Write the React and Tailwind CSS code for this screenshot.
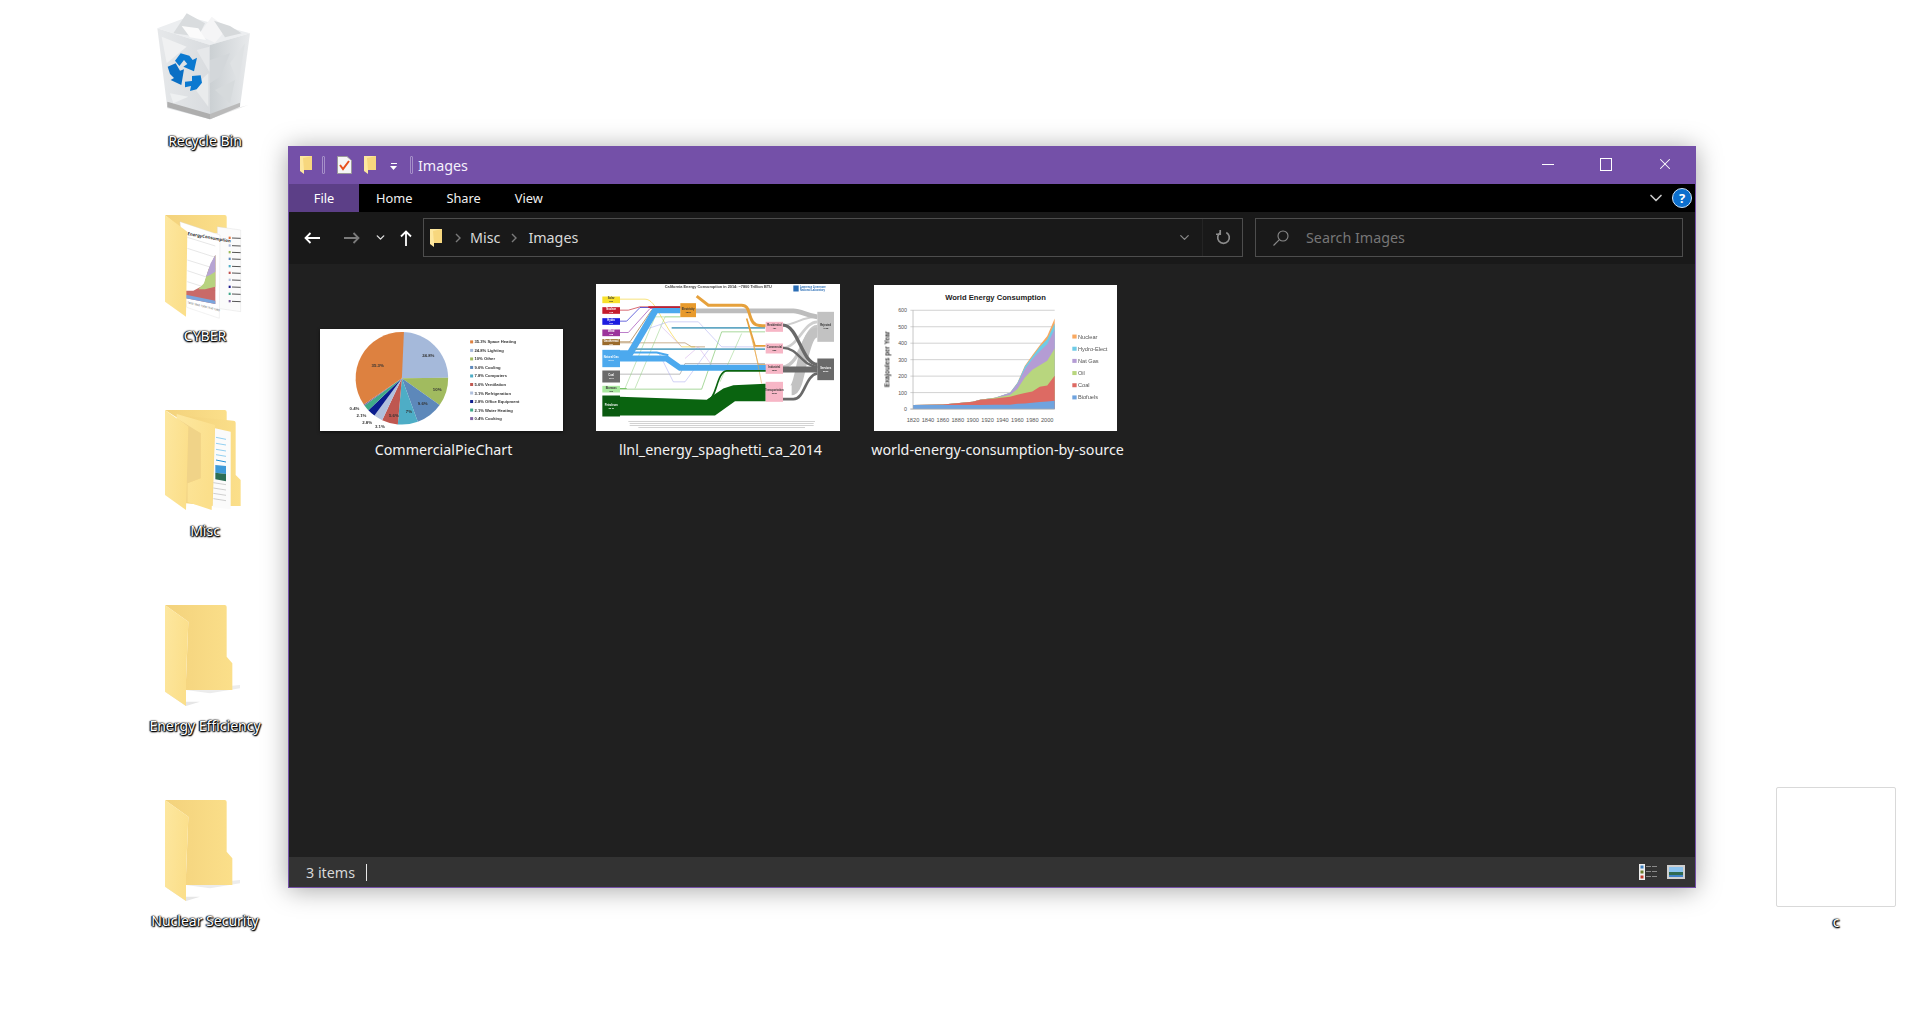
import { ChevronDown, X } from "lucide-react";

// desktop icons are drawn in the 3x coordinates of the reference crops
function FolderDefs() {
  return (
    <svg className="absolute h-0 w-0">
      <defs>
        <linearGradient id="folderBack" x1="0" y1="0" x2="1" y2="0">
          <stop offset="0" stopColor="#f3d27c" />
          <stop offset="1" stopColor="#fbdf8a" />
        </linearGradient>
        <linearGradient id="folderFlap" x1="0" y1="0" x2="1" y2="0.4">
          <stop offset="0" stopColor="#fde79f" />
          <stop offset="1" stopColor="#fbdf8b" />
        </linearGradient>
        <linearGradient id="binLeft" x1="0" y1="0" x2="1" y2="0">
          <stop offset="0" stopColor="#e6e8ea" />
          <stop offset="1" stopColor="#d9dcdf" />
        </linearGradient>
        <linearGradient id="binRight" x1="0" y1="0" x2="1" y2="0">
          <stop offset="0" stopColor="#cbd0d3" />
          <stop offset="1" stopColor="#e8eaec" />
        </linearGradient>
      </defs>
    </svg>
  );
}

function IconFrame({ children }) {
  return (
    <svg viewBox="0 0 450 390" className="h-[130px] w-[150px] shrink-0">
      {children}
    </svg>
  );
}

function RecycleBinIcon() {
  return (
    <IconFrame>
      <polygon points="130,320 240,358 355,315 240,345" fill="#e8e8e8" />
      <polygon points="82,85 175,50 360,100 240,135" fill="#eceef0" />
      <polygon points="82,85 240,135 240,358 112,325" fill="url(#binLeft)" />
      <polygon points="240,135 360,100 330,320 240,358" fill="url(#binRight)" />
      <polygon points="112,305 240,342 240,358 112,322" fill="#aeaeae" />
      <polygon points="240,342 330,308 330,320 240,358" fill="#bababa" />
      <polygon points="240,180 300,160 270,230 240,250" fill="#d3d7da" />
      <polygon points="300,190 345,130 325,250" fill="#dfe2e4" />
      <polygon points="255,270 315,240 300,310" fill="#d6dadc" />
      <polygon points="95,110 170,140 110,190" fill="#f0f1f2" />
      <polygon points="190,260 235,220 235,320" fill="#e9ebec" />
      <polygon points="120,280 175,290 130,310" fill="#eef0f1" />
      <polygon points="200,150 238,140 238,215" fill="#e6e8ea" />
      <polygon points="130,100 170,40 225,70 205,110" fill="#d9dcde" />
      <polygon points="205,105 245,50 292,85 255,128" fill="#f5f5f6" />
      <polygon points="155,78 205,85 228,120 180,112" fill="#fbfbfb" />
      <polygon points="252,62 300,78 335,100 285,112" fill="#d6d9db" />
      <polygon points="135,182 152,160 178,167 188,180 201,173 192,214 160,200 172,192 162,180 148,198" fill="#0b79d0" />
      <polygon points="113,200 137,190 150,212 162,208 154,255 122,240 132,234 120,222" fill="#0a6fc4" />
      <polygon points="165,245 186,243 186,228 212,226 216,248 200,268 180,273 183,258 165,262" fill="#0b79d0" />
    </IconFrame>
  );
}

function EmptyFolderIcon() {
  return (
    <IconFrame>
      <g transform="translate(0,-555)">
        <polygon points="168,870 330,855 330,865 240,880" fill="#ececec" />
        <polygon points="105,875 168,918 210,905 168,905" fill="#e6e6e6" />
        <path d="M105 615 H284 Q290 615 290 621 V770 L307 790 V870 H168 V840 L175 665 Z" fill="url(#folderBack)" />
        <polygon points="105,615 175,665 168,830 168,918 105,875" fill="url(#folderFlap)" />
      </g>
    </IconFrame>
  );
}

function CyberFolderIcon() {
  return (
    <IconFrame>
      <g transform="translate(0,-585)">
        <path d="M105 645 H284 Q290 645 290 651 V700 H168 Z" fill="url(#folderBack)" />
        <polygon points="262,680 332,690 332,935 262,925" fill="#fbfbfb" stroke="#d4d4d4" strokeWidth="1" />
        <rect x="296" y="710" width="6" height="7" fill="#e5733a" />
        <rect x="296" y="733" width="6" height="7" fill="#a8b7dc" />
        <rect x="296" y="753" width="6" height="7" fill="#9cbb58" />
        <rect x="296" y="773" width="6" height="7" fill="#5b88bb" />
        <rect x="296" y="795" width="6" height="7" fill="#4fadc5" />
        <rect x="296" y="815" width="6" height="7" fill="#c0504d" />
        <rect x="296" y="836" width="6" height="7" fill="#b0bfdc" />
        <rect x="296" y="857" width="6" height="7" fill="#1a1a8c" />
        <rect x="296" y="878" width="6" height="7" fill="#3fa88a" />
        <rect x="296" y="900" width="6" height="7" fill="#8064a2" />
        <g stroke="#555" strokeWidth="3">
          <line x1="306" y1="714" x2="332" y2="715" />
          <line x1="306" y1="737" x2="332" y2="738" />
          <line x1="306" y1="757" x2="332" y2="758" />
          <line x1="306" y1="777" x2="332" y2="778" />
          <line x1="306" y1="799" x2="332" y2="800" />
          <line x1="306" y1="819" x2="332" y2="820" />
          <line x1="306" y1="840" x2="332" y2="841" />
          <line x1="306" y1="861" x2="332" y2="862" />
          <line x1="306" y1="882" x2="332" y2="883" />
          <line x1="306" y1="904" x2="332" y2="905" />
        </g>
        <polygon points="150,665 270,705 268,955 170,922" fill="#fff" stroke="#d8d8d8" strokeWidth="1" />
        <g stroke="#cfcfcf" strokeWidth="1.5">
          <line x1="172" y1="712" x2="256" y2="738" />
          <line x1="172" y1="745" x2="256" y2="772" />
          <line x1="172" y1="780" x2="256" y2="806" />
          <line x1="172" y1="812" x2="256" y2="840" />
          <line x1="172" y1="845" x2="256" y2="872" />
        </g>
        <polygon points="168,895 256,912 256,765 235,810 222,855 190,872 168,872" fill="#c0504d" opacity="0.85" />
        <polygon points="205,868 222,850 235,810 256,765 256,860 225,868" fill="#b7d27f" />
        <polygon points="228,830 242,790 256,765 256,815 240,825" fill="#b6a4d3" />
        <polygon points="168,895 256,912 256,902 168,884" fill="#7ba5dd" />
        <text x="172" y="705" fontSize="13" fontWeight="700" fill="#333" transform="rotate(10 172 705)">EnergyConsumption</text>
        <text x="172" y="910" fontSize="8" fill="#555" transform="rotate(14 172 910)">1820 1860 1900 1940 1980</text>
        <polygon points="105,645 172,695 168,950 105,905" fill="url(#folderFlap)" />
      </g>
    </IconFrame>
  );
}

function MiscFolderIcon() {
  return (
    <IconFrame>
      <g transform="translate(0,30)">
        <path d="M105 30 H284 Q290 30 290 36 V70 H168 Z" fill="url(#folderBack)" />
        <path d="M140 45 L310 62 Q317 62 317 68 V225 L332 240 V318 H250 L168 310 V80 Z" fill="url(#folderBack)" />
        <polygon points="255,85 302,95 302,328 248,322" fill="#fbfbfb" />
        <g stroke="#7dc6ee" strokeWidth="2.5">
          <line x1="258" y1="112" x2="288" y2="118" />
          <line x1="258" y1="130" x2="288" y2="135" />
          <line x1="258" y1="148" x2="288" y2="153" />
          <line x1="258" y1="164" x2="288" y2="169" />
        </g>
        <line x1="258" y1="180" x2="288" y2="186" stroke="#1f8ed6" strokeWidth="3" />
        <polygon points="256,195 288,198 288,222 256,218" fill="#3f9ad8" />
        <polygon points="256,218 288,222 288,244 256,238" fill="#2d6e55" />
        <g stroke="#b8b8b8" strokeWidth="2">
          <line x1="250" y1="248" x2="288" y2="254" />
          <line x1="250" y1="264" x2="288" y2="270" />
          <line x1="250" y1="280" x2="288" y2="286" />
          <line x1="250" y1="296" x2="288" y2="302" />
        </g>
        <polygon points="140,42 255,75 245,330 172,306 172,250 212,235 212,100 140,62" fill="url(#folderFlap)" />
        <polygon points="140,55 212,100 212,235 172,250 172,306 168,305 175,80" fill="#f0d388" />
        <polygon points="105,30 175,80 168,330 105,285" fill="url(#folderFlap)" />
      </g>
    </IconFrame>
  );
}

function DesktopItem({ label, children }) {
  return (
    <div className="flex h-[195px] flex-col items-center">
      {children}
      <span className="mt-[1px] whitespace-nowrap text-[14px] leading-5 text-white [text-shadow:0_0_1px_#000,0_0_2px_#000,0_1px_2px_#000,1px_1px_1px_#000,-1px_0_1px_#000]">
        {label}
      </span>
    </div>
  );
}

const PIE_SLICES = [
  [24.8, "#a5b9da"],
  [10, "#a1bb5f"],
  [9.6, "#5d88ba"],
  [7, "#4eadc6"],
  [5.6, "#bf5750"],
  [3.1, "#b1c0dd"],
  [2.8, "#0a1c8e"],
  [2.1, "#40a98a"],
  [0.4, "#8064a2"],
  [35.3, "#dd8140"],
];

const PIE_LEGEND = [
  ["#dd8140", "35.3% Space Heating"],
  ["#a5b9da", "24.8% Lighting"],
  ["#a1bb5f", "10% Other"],
  ["#5d88ba", "9.6% Cooling"],
  ["#4eadc6", "7.8% Computers"],
  ["#bf5750", "5.6% Ventilation"],
  ["#b1c0dd", "3.1% Refrigeration"],
  ["#0a1c8e", "2.8% Office Equipment"],
  ["#40a98a", "2.1% Water Heating"],
  ["#8064a2", "0.4% Cooking"],
];

function pieSlices() {
  const cx = 274;
  const cy = 175;
  const r = 139;
  let used = 0;
  return PIE_SLICES.map(([pct, color]) => {
    const a0 = (used / 100) * Math.PI * 2;
    used += pct;
    const a1 = (used / 100) * Math.PI * 2;
    const x0 = cx + r * Math.sin(a0);
    const y0 = cy - r * Math.cos(a0);
    const x1 = cx + r * Math.sin(a1);
    const y1 = cy - r * Math.cos(a1);
    const large = pct > 50 ? 1 : 0;
    return (
      <path
        key={color}
        d={`M${cx} ${cy} L${x0} ${y0} A${r} ${r} 0 ${large} 1 ${x1} ${y1} Z`}
        fill={color}
      />
    );
  });
}

function PieThumb() {
  return (
    <svg viewBox="28 28 730 304" className="block h-[102px] w-[243px] blur-[0.35px]">
      <rect x="28" y="28" width="730" height="304" fill="#fff" />
      {pieSlices()}
      <g fontSize="13" fontWeight="700" fill="#333" fontFamily="Liberation Sans, sans-serif">
        <text x="183" y="140">35.3%</text>
        <text x="335" y="112">24.8%</text>
        <text x="367" y="212">10%</text>
        <text x="322" y="255">9.6%</text>
        <text x="286" y="280">7%</text>
        <text x="235" y="290">5.6%</text>
        <text x="117" y="269">0.4%</text>
        <text x="138" y="290">2.1%</text>
        <text x="155" y="311">2.8%</text>
        <text x="193" y="324">3.1%</text>
      </g>
      {PIE_LEGEND.map(([color, text], i) => (
        <g key={text}>
          <rect x="479" y={61 + i * 25.6} width="9" height="9" fill={color} />
          <text x="492" y={70 + i * 25.6} fontSize="12.5" fontWeight="700" fill="#333" fontFamily="Liberation Sans, sans-serif">
            {text}
          </text>
        </g>
      ))}
    </svg>
  );
}

function SankeyBox({ x, y, w, h, fill, title, value, color = "#fff" }) {
  return (
    <g>
      <rect x={x} y={y} width={w} height={h} fill={fill} />
      <text x={x + w / 2} y={y + h / 2 - 1} textAnchor="middle" fontSize="8" fontWeight="700" fill={color}>{title}</text>
      <text x={x + w / 2} y={y + h / 2 + 8} textAnchor="middle" fontSize="7" fontWeight="700" fill={color}>{value}</text>
    </g>
  );
}

function SankeyThumb() {
  return (
    <svg viewBox="33 27 732 440" className="block h-[147px] w-[244px] blur-[0.4px]" fontFamily="Liberation Sans, sans-serif">
      <rect x="33" y="27" width="732" height="440" fill="#fff" />
      <text x="400" y="40" textAnchor="middle" fontSize="11.5" fontWeight="700" fill="#444">California Energy Consumption in 2014: ~7800 Trillion BTU</text>
      <rect x="625" y="31" width="16" height="18" fill="#2a6db5" />
      <text x="645" y="38" fontSize="8" fontWeight="700" fill="#2a6db5">Lawrence Livermore</text>
      <text x="645" y="48" fontSize="8" fontWeight="700" fill="#2a6db5">National Laboratory</text>

      {/* thin flows */}
      <g fill="none" strokeWidth="2">
        <path d="M105 72 H180 C215 72 230 150 290 215 H330" stroke="#f5d33b" />
        <path d="M105 105 H130 L165 95 H286" stroke="#c41f2c" />
        <path d="M105 138 H125 L165 97 H286" stroke="#2020cc" />
        <path d="M105 172 H130 L195 100 H286" stroke="#9c3fb0" />
        <path d="M105 200 H135 L200 105 H286" stroke="#9a6a2a" />
        <path d="M105 203 H300 L320 215 H360" stroke="#b08a5a" />
        <path d="M105 297 H285 L300 265 H540" stroke="#9a9a9a" />
        <path d="M105 342 H350 L410 170 H540" stroke="#7bc46a" />
        <path d="M120 340 L210 125 H286" stroke="#8ccf7a" strokeWidth="1.5" />
        <path d="M150 340 L240 125 H286" stroke="#8ccf7a" strokeWidth="1.5" />
        <path d="M190 160 L250 140 H340 L410 215 H540" stroke="#a6a6ee" strokeWidth="1.5" />
        <path d="M220 230 L265 320 H300 L370 225" stroke="#a6a6ee" strokeWidth="1.5" />
        <path d="M300 250 L340 215 L380 270 H540" stroke="#cfa6e6" strokeWidth="1.5" />
        <path d="M470 175 L405 320" stroke="#8ccf7a" strokeWidth="1.5" />
        <path d="M225 150 L290 215" stroke="#c9a6e6" strokeWidth="1.5" />
      </g>

      {/* rejected energy */}
      <path d="M594 150 C630 150 650 125 697 125" fill="none" stroke="#cfcfcf" strokeWidth="6" />
      <path d="M594 218 C640 218 655 140 697 140" fill="none" stroke="#cfcfcf" strokeWidth="8" />
      <path d="M594 275 C645 275 660 150 697 155" fill="none" stroke="#c8c8c8" strokeWidth="10" />
      <path d="M620 345 C650 345 650 170 697 172" fill="none" stroke="#c2c2c2" strokeWidth="30" />
      <path d="M333 107 L500 107 H625 C650 107 665 122 697 125" fill="none" stroke="#bdbdbd" strokeWidth="14" />

      {/* natural gas and electricity */}
      <path d="M105 250 H245 L285 278 H545" fill="none" stroke="#4ca9ee" strokeWidth="18" />
      <path d="M105 235 H135 L212 104 H286" fill="none" stroke="#4ca9ee" strokeWidth="20" />
      <path d="M105 232 L215 232 L250 240" fill="none" stroke="#4ca9ee" strokeWidth="6" />
      <path d="M190 96 H286" stroke="#c41f2c" strokeWidth="5" />
      <path d="M260 158 H540" fill="none" stroke="#63a8c4" strokeWidth="5" />
      <path d="M150 222 H540" fill="none" stroke="#63a8c4" strokeWidth="5" />
      <path d="M335 63 L370 90 H470 C490 90 490 110 498 130 C505 150 515 152 542 152" fill="none" stroke="#e6a13c" strokeWidth="9" />
      <path d="M485 130 L510 212 H542" fill="none" stroke="#e6a13c" strokeWidth="5" />
      <path d="M490 150 L520 268 H542" fill="none" stroke="#e6a13c" strokeWidth="2" />
      <path d="M505 200 L530 325" fill="none" stroke="#e6a13c" strokeWidth="1.5" />

      {/* petroleum */}
      <polygon points="105,365 365,374 415,340 445,330 542,326 542,378 450,378 390,421 105,421" fill="#0a6410" />
      <path d="M370 374 C395 370 395 289 425 287 H545" fill="none" stroke="#0a6410" strokeWidth="5" />
      <path d="M105 340 H125" stroke="#7bc46a" strokeWidth="3" />

      {/* useful energy */}
      <path d="M594 150 C640 150 650 265 697 268" fill="none" stroke="#696969" strokeWidth="10" />
      <path d="M594 218 C640 218 650 272 697 275" fill="none" stroke="#696969" strokeWidth="7" />
      <path d="M594 283 H697" fill="none" stroke="#696969" strokeWidth="18" />
      <path d="M594 372 H625 C660 372 660 300 697 295" fill="none" stroke="#696969" strokeWidth="8" />

      <SankeyBox x={52} y={64} w={53} h={20} fill="#f8e02c" title="Solar" value="220" color="#333" />
      <SankeyBox x={52} y={96} w={53} h={20} fill="#c61c2e" title="Nuclear" value="175" />
      <SankeyBox x={52} y={129} w={53} h={20} fill="#1c1ce0" title="Hydro" value="161" />
      <SankeyBox x={52} y={163} w={53} h={20} fill="#9c349c" title="Wind" value="128" />
      <SankeyBox x={52} y={192} w={53} h={18} fill="#9a6a2a" title="Geothermal" value="127" />
      <SankeyBox x={52} y={224} w={53} h={52} fill="#4ca9ee" title="Natural Gas" value="2417" />
      <SankeyBox x={52} y={286} w={53} h={36} fill="#6b6b6b" title="Coal" value="19.3" />
      <SankeyBox x={52} y={332} w={53} h={20} fill="#aaeaa0" title="Biomass" value="366" color="#333" />
      <SankeyBox x={52} y={361} w={53} h={63} fill="#0a5a10" title="Petroleum" value="3648" />
      <SankeyBox x={286} y={84} w={47} h={42} fill="#e89a2c" title="Electricity" value="1853" color="#333" />
      <SankeyBox x={542} y={140} w={52} h={30} fill="#f7b6c6" title="Residential" value="451" color="#333" />
      <SankeyBox x={542} y={205} w={52} h={30} fill="#f7b6c6" title="Commercial" value="552" color="#333" />
      <SankeyBox x={542} y={266} w={52} h={30} fill="#f7b6c6" title="Industrial" value="1535" color="#333" />
      <SankeyBox x={542} y={320} w={52} h={60} fill="#f7b6c6" title="Transportation" value="3038" color="#333" />
      <SankeyBox x={697} y={110} w={50} h={90} fill="#c2c2c2" title="Rejected" value="4668" color="#333" />
      <SankeyBox x={697} y={250} w={50} h={65} fill="#6a6a6a" title="Services" value="2503" />

      <g fill="#bbb">
        <rect x="130" y="438" width="560" height="2" />
        <rect x="134" y="444" width="552" height="2" />
        <rect x="134" y="450" width="552" height="2" />
        <rect x="160" y="456" width="500" height="2" />
      </g>
    </svg>
  );
}

const YEARS = [1820, 1860, 1900, 1910, 1930, 1950, 1960, 1970, 1980, 1990, 2000, 2010];
const ENERGY_LAYERS = [
  ["#f8a860", [388, 386, 378, 372, 366, 351, 321, 270, 238, 208, 180, 128]],
  ["#6fcbe6", [388, 386, 378, 372, 366, 351, 322, 272, 243, 213, 190, 142]],
  ["#b49cd4", [388, 386, 378, 372, 366, 352, 325, 280, 250, 226, 205, 160]],
  ["#b8d67e", [388, 386, 378, 372, 366, 358, 340, 305, 282, 268, 255, 218]],
  ["#dd6a63", [388, 386, 378, 372, 368, 363, 357, 352, 347, 333, 329, 300]],
  ["#6fa3de", [388, 388, 388, 388, 387, 387, 384, 383, 381, 379, 377, 375]],
];

function areaPoints(tops) {
  const top = YEARS.map((y, i) => `${142 + (y - 1820) * 2.242},${tops[i]}`);
  return `142,400 ${top.join(" ")} 568,400`;
}

function WorldThumb() {
  const yLabels = [0, 100, 200, 300, 400, 500, 600];
  const xLabels = [1820, 1840, 1860, 1880, 1900, 1920, 1940, 1960, 1980, 2000];
  const legend = [
    ["#f8a860", "Nuclear"],
    ["#6fcbe6", "Hydro-Elect"],
    ["#b49cd4", "Nat Gas"],
    ["#b8d67e", "Oil"],
    ["#dd6a63", "Coal"],
    ["#6fa3de", "Biofuels"],
  ];
  return (
    <svg viewBox="25 27 730 439" className="block h-[146px] w-[243px] blur-[0.3px]" fontFamily="Liberation Sans, sans-serif">
      <rect x="25" y="27" width="730" height="439" fill="#fff" />
      <text x="390" y="71" textAnchor="middle" fontSize="23" fontWeight="700" fill="#222">World Energy Consumption</text>
      {yLabels.map((v) => (
        <g key={v}>
          <line x1="134" x2="568" y1={400 - v * 0.495} y2={400 - v * 0.495} stroke="#c9c9c9" strokeWidth="2.5" />
          <text x="124" y={406 - v * 0.495} textAnchor="end" fontSize="16" fill="#555">{v}</text>
        </g>
      ))}
      {ENERGY_LAYERS.map(([color, tops]) => (
        <polygon key={color} points={areaPoints(tops)} fill={color} />
      ))}
      <line x1="142" y1="103" x2="142" y2="400" stroke="#aaa" strokeWidth="2" />
      <line x1="134" y1="400" x2="568" y2="400" stroke="#aaa" strokeWidth="2" />
      {xLabels.map((v) => (
        <text key={v} x={142 + (v - 1820) * 2.242} y="438" textAnchor="middle" fontSize="17" fill="#555">{v}</text>
      ))}
      <text x="0" y="0" textAnchor="middle" fontSize="19" fontWeight="700" fill="#333" transform="translate(72,250) rotate(-90)">Exajoules per Year</text>
      {legend.map(([color, text], i) => (
        <g key={text}>
          <rect x="621" y={176 + i * 36.6} width="13" height="12" fill={color} />
          <text x="638" y={188 + i * 36.6} fontSize="17" fill="#555">{text}</text>
        </g>
      ))}
    </svg>
  );
}

function Tile({ label, children, imageClass }) {
  return (
    <div className="flex w-[277px] shrink-0 flex-col items-center">
      <div className="flex h-[147px] items-end">
        <div className={imageClass}>{children}</div>
      </div>
      <span className="mt-[9px] whitespace-nowrap text-[14.3px] leading-5 text-[#f2f2f2]">{label}</span>
    </div>
  );
}

function SmallFolder({ className }) {
  return (
    <svg viewBox="0 0 13 18" className={className}>
      <polygon points="1,0 13,0 13,14 5,14 5,18 1,15" fill="#fde79f" />
      <polygon points="4,2 13,0 13,14 5,14" fill="#f7d77e" />
    </svg>
  );
}

function BarSeparator() {
  return <div className="h-[18px] w-[3px] rounded-[1px] border border-[#a58fc8]" />;
}

function TitleBar() {
  return (
    <div className="flex h-[38px] shrink-0 items-center bg-[#7450a8] pl-[10px] text-white">
      <SmallFolder className="h-[18px] w-[13px]" />
      <div className="ml-[10px]"><BarSeparator /></div>
      <svg viewBox="0 0 15 18" className="ml-[12px] h-[18px] w-[15px]">
        <path d="M0.5 0.5 H10 L14.5 4.5 V17.5 H0.5 Z" fill="#f5f5f5" stroke="#9a9a9a" />
        <path d="M3 9 L6 13 L12 5" fill="none" stroke="#e8501c" strokeWidth="2" />
      </svg>
      <SmallFolder className="ml-[11px] h-[18px] w-[13px]" />
      <svg viewBox="0 0 8 8" className="ml-[14px] mt-[3px] h-[8px] w-[8px]">
        <rect x="1" y="0" width="6" height="1" fill="#fff" />
        <polygon points="0,3 7,3 3.5,7" fill="#fff" />
      </svg>
      <div className="ml-[12px]"><BarSeparator /></div>
      <span className="ml-[5px] mt-[1px] text-[14.3px] text-[#f5f0fb]">Images</span>
      <div className="ml-auto flex h-full items-center">
        <div className="flex w-[58px] justify-center pb-[2px]">
          <div className="h-px w-[12px] bg-white" />
        </div>
        <div className="flex w-[58px] justify-center pb-[2px]">
          <div className="h-[13px] w-[12px] border border-white" />
        </div>
        <div className="flex w-[60px] justify-center pb-[2px]">
          <X className="h-[18px] w-[18px]" strokeWidth={1.4} />
        </div>
      </div>
    </div>
  );
}

function RibbonTabs() {
  return (
    <div className="flex h-[28px] shrink-0 items-center bg-black pt-[1px] text-[12.8px] text-[#f0f0f0]">
      <div className="-mt-[1px] flex h-[28px] w-[70px] items-center justify-center bg-[#5c3f87] pt-[1px] text-white">File</div>
      <span className="ml-[17px]">Home</span>
      <span className="ml-[34px]">Share</span>
      <span className="ml-[34px]">View</span>
      <ChevronDown className="ml-auto -mt-[1px] h-[20px] w-[20px] text-[#c8c8c8]" strokeWidth={2} />
      <div className="-mt-[1px] ml-[6px] mr-[3px] flex h-[20px] w-[20px] items-center justify-center rounded-full border border-[#cfe4f8] bg-[#0c6fcd] text-[13px] font-bold leading-none text-white">
        ?
      </div>
    </div>
  );
}

function ArrowLeft({ className }) {
  return (
    <svg viewBox="0 0 16 12" className={className} fill="none" stroke="currentColor" strokeWidth="1.8">
      <path d="M16 6 H1.5 M6.5 1 L1.5 6 L6.5 11" />
    </svg>
  );
}

function AddressBar() {
  return (
    <div className="flex h-[52px] shrink-0 items-center bg-[#191919] pb-[1px] pr-[12px]">
      <ArrowLeft className="ml-[15px] h-[12px] w-[16px] text-white" />
      <ArrowLeft className="ml-[24px] h-[12px] w-[16px] rotate-180 text-[#7b7b7b]" />
      <ChevronDown className="ml-[14px] h-[13px] w-[13px] text-[#e0e0e0]" strokeWidth={2.5} />
      <svg viewBox="0 0 12 16" className="ml-[13px] h-[16px] w-[12px] text-white" fill="none" stroke="currentColor" strokeWidth="1.8">
        <path d="M6 16 V1.5 M1 6.5 L6 1.5 L11 6.5" />
      </svg>
      <div className="ml-[11px] flex h-[39px] w-[820px] items-center border border-[#4d4d4d] text-[14.3px] text-[#d9d9d9]">
        <SmallFolder className="ml-[5px] h-[18px] w-[13px]" />
        <svg viewBox="0 0 6 10" className="ml-[13px] h-[10px] w-[6px]" fill="none" stroke="#7a7a7a" strokeWidth="1.4"><path d="M1 1 L5 5 L1 9" /></svg>
        <span className="ml-[9px]">Misc</span>
        <svg viewBox="0 0 6 10" className="ml-[11px] h-[10px] w-[6px]" fill="none" stroke="#7a7a7a" strokeWidth="1.4"><path d="M1 1 L5 5 L1 9" /></svg>
        <span className="ml-[11px]">Images</span>
        <div className="ml-auto flex h-full items-center">
          <ChevronDown className="mr-[10px] h-[15px] w-[15px] text-[#8a8a8a]" strokeWidth={2} />
          <div className="h-full w-px bg-[#242424]" />
          <svg viewBox="0 0 16 16" className="ml-[13px] mr-[11px] h-[15px] w-[15px]" fill="none" stroke="#8c8c8c" strokeWidth="1.8">
            <path d="M5 2.6 A6.2 6.2 0 1 0 11 2.6" />
            <path d="M4.5 0 V4.5 H0" />
          </svg>
        </div>
      </div>
      <div className="ml-[12px] flex h-[39px] flex-1 items-center border border-[#4d4d4d] text-[14.3px] text-[#767676]">
        <svg viewBox="0 0 16 16" className="ml-[17px] h-[16px] w-[16px]" fill="none" stroke="#8a8a8a" strokeWidth="1.1">
          <circle cx="10" cy="6" r="5" />
          <path d="M6.4 9.6 L0.5 15.5" />
        </svg>
        <span className="ml-[17px]">Search Images</span>
      </div>
    </div>
  );
}

function StatusBar() {
  return (
    <div className="flex h-[30px] shrink-0 items-center bg-[#333333] pl-[17px] pr-[10px] text-[14.3px] text-[#d8d8d8]">
      <span className="mt-[1px]">3 items</span>
      <div className="ml-[11px] mt-[1px] h-[17px] w-px bg-[#e8e8e8]" />
      <div className="ml-auto flex items-center">
        <svg viewBox="0 0 19 16" className="h-[16px] w-[19px]">
          <rect x="0" y="0" width="6" height="16" fill="#eee" />
          <rect x="1.5" y="1.5" width="3" height="3" fill="#3a7fc0" />
          <rect x="1.5" y="6.5" width="3" height="3" fill="#6a7a2a" />
          <rect x="1.5" y="11.5" width="3" height="3" fill="#c03a2a" />
          <g fill="#8a8a8a">
            <rect x="7" y="2" width="5" height="1" />
            <rect x="13" y="2" width="5" height="1" />
            <rect x="7" y="7" width="5" height="1" />
            <rect x="13" y="7" width="5" height="1" />
            <rect x="7" y="12" width="5" height="1" />
            <rect x="13" y="12" width="5" height="1" />
          </g>
        </svg>
        <svg viewBox="0 0 18 14" className="ml-[9px] h-[14px] w-[18px]">
          <rect x="0" y="0" width="18" height="14" fill="#cfcfcf" />
          <rect x="2" y="2" width="14" height="5" fill="#8cc4f0" />
          <rect x="2" y="7" width="14" height="3" fill="#2f6a50" />
          <rect x="2" y="10" width="14" height="2" fill="#3f82c8" />
        </svg>
      </div>
    </div>
  );
}

function ExplorerWindow() {
  return (
    <div className="absolute left-[288px] top-[146px] flex h-[742px] w-[1408px] flex-col border-x border-b border-[#7450a8] shadow-[0_2px_24px_rgba(0,0,0,0.35)]">
      <TitleBar />
      <RibbonTabs />
      <AddressBar />
      <div className="flex min-h-0 flex-1 items-start bg-[#202020] pl-[16px] pt-[20px]">
        <Tile label="CommercialPieChart" imageClass="mr-[4px] bg-white shadow-[0_1px_3px_rgba(0,0,0,0.6)]"><PieThumb /></Tile>
        <Tile label="llnl_energy_spaghetti_ca_2014" imageClass="mr-[6px] bg-white"><SankeyThumb /></Tile>
        <Tile label="world-energy-consumption-by-source" imageClass="mr-[4px] bg-white"><WorldThumb /></Tile>
      </div>
      <StatusBar />
    </div>
  );
}

export default function App() {
  return (
    <div className="relative h-[1027px] w-[1912px] overflow-hidden bg-white font-['Noto_Sans',sans-serif]">
      <FolderDefs />
      <div className="ml-[130px] flex w-[150px] flex-col">
        <DesktopItem label="Recycle Bin"><RecycleBinIcon /></DesktopItem>
        <DesktopItem label="CYBER"><CyberFolderIcon /></DesktopItem>
        <DesktopItem label="Misc"><MiscFolderIcon /></DesktopItem>
        <DesktopItem label="Energy Efficiency"><EmptyFolderIcon /></DesktopItem>
        <DesktopItem label="Nuclear Security"><EmptyFolderIcon /></DesktopItem>
      </div>
      <ExplorerWindow />
      <div className="absolute left-[1776px] top-[787px] flex w-[120px] flex-col items-center">
        <div className="h-[120px] w-[120px] rounded-[2px] border border-[#d9d9d9] bg-white" />
        <span className="mt-[5px] text-[14px] leading-5 text-white [text-shadow:0_0_1px_#000,0_0_2px_#000,0_1px_2px_#000,1px_1px_1px_#000,-1px_0_1px_#000]">c</span>
      </div>
    </div>
  );
}
